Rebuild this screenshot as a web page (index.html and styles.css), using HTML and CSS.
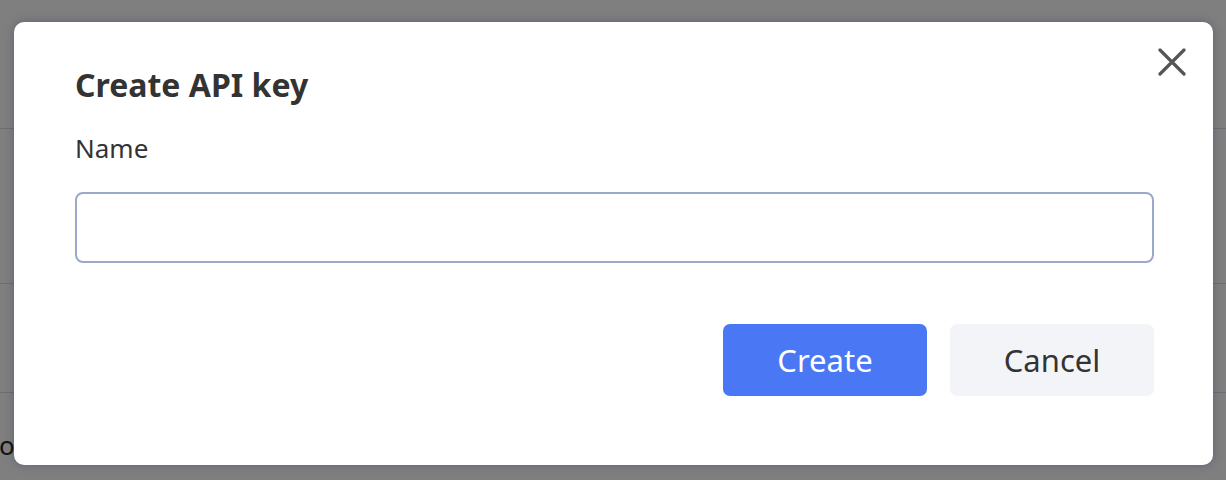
FILE: index.html
```html
<!DOCTYPE html>
<html>
<head>
<meta charset="utf-8">
<link rel="stylesheet" href="styles.css">
</head>
<body>
<div class="page">
  <div class="row row-1"></div>
  <div class="row row-2"></div>
  <div class="row row-3"></div>
  <div class="row row-4"><span class="cell">o</span></div>
</div>
<div class="overlay"></div>
<div class="modal">
  <button class="close" aria-label="Close">
    <svg width="28" height="28" viewBox="0 0 28 28"><path d="M2 2 L26 26 M26 2 L2 26" stroke="#555" stroke-width="3.2" stroke-linecap="round"/></svg>
  </button>
  <h2 class="title">Create API key</h2>
  <label class="label" for="name">Name</label>
  <input class="input" id="name" type="text">
  <div class="actions">
    <button class="btn btn-primary">Create</button>
    <button class="btn btn-secondary">Cancel</button>
  </div>
</div>
</body>
</html>
```
FILE: styles.css
```css
html, body {
  margin: 0;
  padding: 0;
  width: 1226px;
  height: 480px;
  overflow: hidden;
  font-family: "Noto Sans", "Open Sans", sans-serif;
  background: #fff;
}
.page {
  display: flex;
  flex-direction: column;
}
.row {
  border-bottom: 1px solid #d9dce6;
}
.row-1 { height: 128px; }
.row-2 { height: 154px; }
.row-3 { height: 108px; }
.row-4 {
  height: 80px;
  padding-top: 34px;
  box-sizing: border-box;
  border-bottom: none;
}
.cell {
  font-size: 26px;
  color: #222;
  margin-left: -1px;
}
.overlay {
  position: absolute;
  inset: 0;
  background: rgba(0, 0, 0, 0.5);
}
.modal {
  position: absolute;
  left: 14px;
  top: 22px;
  width: 1199px;
  height: 443px;
  box-sizing: border-box;
  background: #fff;
  border-radius: 10px;
  box-shadow: 0 0 10px rgba(40, 50, 90, 0.35);
  padding: 41px 59px 0 61px;
  display: flex;
  flex-direction: column;
}
.close {
  position: absolute;
  top: 26px;
  right: 27px;
  border: none;
  background: none;
  padding: 0;
  width: 28px;
  height: 28px;
  cursor: pointer;
}
.close svg { display: block; }
.title {
  margin: 0;
  font-size: 32px;
  line-height: 44px;
  font-weight: 700;
  color: #333;
}
.label {
  margin-top: 23px;
  font-size: 26px;
  line-height: 36px;
  color: #333;
}
.input {
  margin-top: 26px;
  height: 71px;
  box-sizing: border-box;
  border: 2px solid #9aa8c9;
  border-radius: 8px;
  background: #fff;
  font-family: inherit;
  font-size: 24px;
  padding: 0 16px;
  outline: none;
}
.actions {
  margin-top: 61px;
  display: flex;
  justify-content: flex-end;
  gap: 23px;
}
.btn {
  width: 204px;
  height: 72px;
  border: none;
  border-radius: 7px;
  font-family: inherit;
  font-size: 31px;
  line-height: 1;
  padding: 0;
  cursor: pointer;
}
.btn-primary {
  background: #4a78f5;
  color: #fff;
}
.btn-secondary {
  background: #f3f4f8;
  color: #333;
}
```
